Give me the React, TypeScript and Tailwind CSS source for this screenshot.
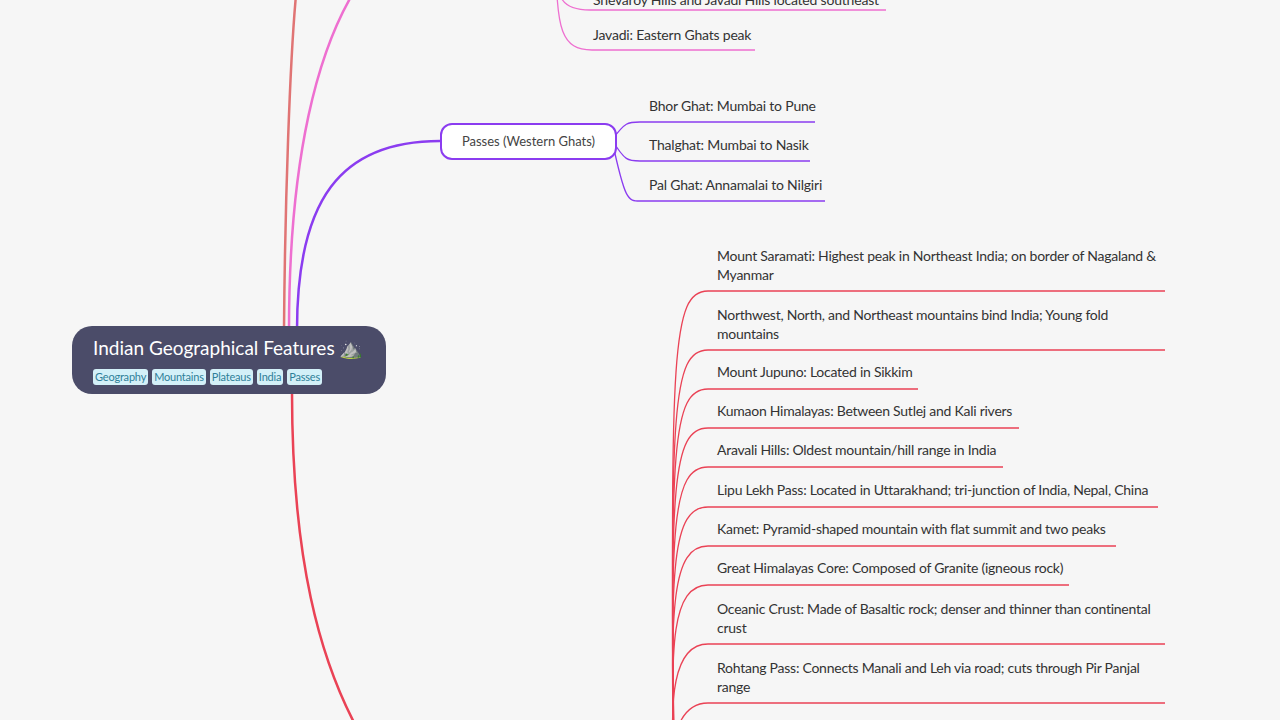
const red = [
  { t: 'Mount Saramati: Highest peak in Northeast India; on border of Nagaland & Myanmar', y: 291, end: 1165, two: true },
  { t: 'Northwest, North, and Northeast mountains bind India; Young fold mountains', y: 350, end: 1165, two: true },
  { t: 'Mount Jupuno: Located in Sikkim', y: 389, end: 918 },
  { t: 'Kumaon Himalayas: Between Sutlej and Kali rivers', y: 428, end: 1019 },
  { t: 'Aravali Hills: Oldest mountain/hill range in India', y: 467, end: 1003 },
  { t: 'Lipu Lekh Pass: Located in Uttarakhand; tri-junction of India, Nepal, China', y: 507, end: 1158 },
  { t: 'Kamet: Pyramid-shaped mountain with flat summit and two peaks', y: 546, end: 1116 },
  { t: 'Great Himalayas Core: Composed of Granite (igneous rock)', y: 585, end: 1069 },
  { t: 'Oceanic Crust: Made of Basaltic rock; denser and thinner than continental crust', y: 644, end: 1165, two: true },
  { t: 'Rohtang Pass: Connects Manali and Leh via road; cuts through Pir Panjal range', y: 703, end: 1165, two: true },
];

const passes = [
  { t: 'Bhor Ghat: Mumbai to Pune', y: 122, end: 815 },
  { t: 'Thalghat: Mumbai to Nasik', y: 161, end: 810 },
  { t: 'Pal Ghat: Annamalai to Nilgiri', y: 201, end: 825 },
];

const tags = ['Geography', 'Mountains', 'Plateaus', 'India', 'Passes'];

export default function App() {
  return (
    <div className="relative w-[1280px] h-[720px] overflow-hidden bg-[#f6f6f6]" style={{ fontFamily: 'Lato, "Noto Sans", sans-serif' }}>
      <svg className="absolute inset-0" width="1280" height="720" fill="none">
        <path d="M284 330 C285 200 290 60 296 -5" stroke="#e07474" strokeWidth="2.5" />
        <path d="M289 330 C289 150 320 50 352 -5" stroke="#ee6fd0" strokeWidth="2.5" />
        <path d="M297 330 C297 200 340 141 440 141" stroke="#8b3cf0" strokeWidth="2.5" />
        <path d="M292 392 C292 560 320 660 358 730" stroke="#ea4255" strokeWidth="2.5" />
        <path d="M556 -40 C556 0 562 10 590 10 L886 10" stroke="#ee6fd0" strokeWidth="1.3" />
        <path d="M556 -40 C556 30 562 50 592 50 L755 50" stroke="#ee6fd0" strokeWidth="1.3" />
        {passes.map((p) => (
          <path key={p.t} d={`M612 140 C625 ${p.y} 628 ${p.y} 640 ${p.y} L${p.end} ${p.y}`} stroke="#8b3cf0" strokeWidth="1.3" />
        ))}
        {red.map((r) => (
          <path key={r.t} d={`M674 760 C670 ${r.y + 60} 672 ${r.y} 708 ${r.y} L${r.end} ${r.y}`} stroke="#ea4255" strokeWidth="1.3" />
        ))}
      </svg>

      <div className="absolute left-[593px] top-[-11px] text-[14px] text-[#333] tracking-[-0.2px]">Shevaroy Hills and Javadi Hills located southeast</div>
      <div className="absolute left-[593px] top-[24px] text-[14px] text-[#333] tracking-[-0.2px]">Javadi: Eastern Ghats peak</div>

      <div className="absolute left-[440px] top-[123px] w-[177px] h-[37px] rounded-xl border-2 border-[#8b3cf0] bg-white flex items-center justify-center text-[13px] text-[#444]">
        Passes (Western Ghats)
      </div>
      {passes.map((p) => (
        <div key={p.t} className="absolute left-[649px] text-[14px] text-[#333] tracking-[-0.2px]" style={{ top: p.y - 27 }}>{p.t}</div>
      ))}

      {red.map((r) => (
        <div key={r.t} className="absolute left-[717px] w-[448px] text-[14px] leading-[19px] text-[#333] tracking-[-0.25px]" style={{ top: r.y - (r.two ? 45 : 27) }}>{r.t}</div>
      ))}

      <div className="absolute left-[72px] top-[326px] w-[314px] h-[68px] rounded-[20px] bg-[#4b4c69] px-[21px] pt-[10px]">
        <div className="text-[19px] text-white leading-[24px]">Indian Geographical Features ⛰️</div>
        <div className="mt-[9px] flex gap-[4px]">
          {tags.map((t) => (
            <span key={t} className="rounded-[3px] bg-[#d3f0f8] px-[2px] text-[11px] leading-[16px] text-[#2f7f98] tracking-[-0.2px]">{t}</span>
          ))}
        </div>
      </div>
    </div>
  );
}
